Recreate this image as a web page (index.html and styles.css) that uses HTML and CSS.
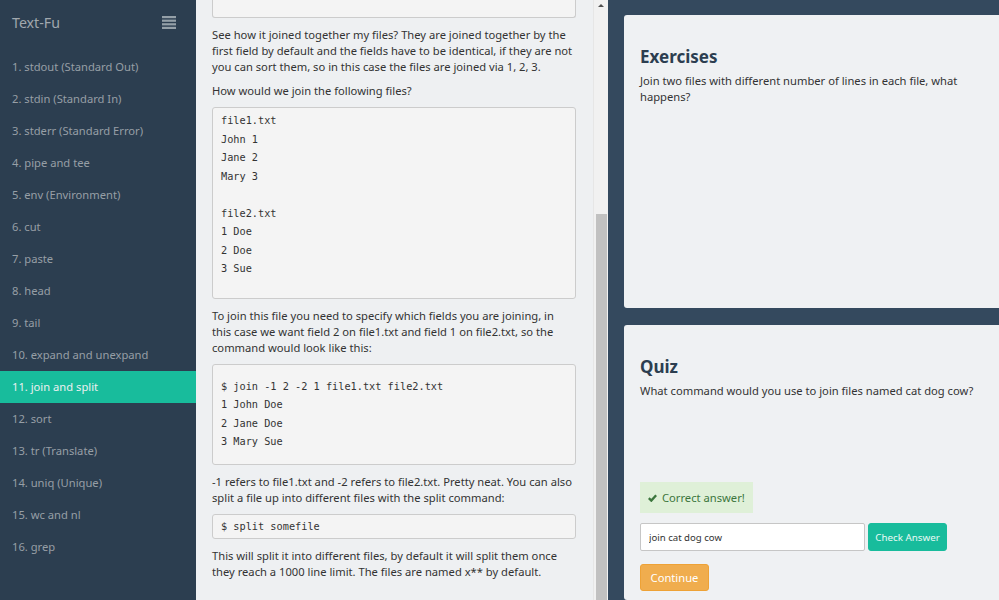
FILE: index.html
```html
<!DOCTYPE html>
<html lang="en">
<head>
<meta charset="utf-8">
<title>Text-Fu</title>
<link rel="stylesheet" href="styles.css">
</head>
<body>
<div class="app">
  <aside class="sidebar">
    <div class="sidebar-head">
      <span class="brand">Text-Fu</span>
      <svg class="menu-icon" width="14" height="13" viewBox="0 0 14 13"><rect x="0" y="0" width="14" height="2.2"/><rect x="0" y="3.6" width="14" height="2.2"/><rect x="0" y="7.2" width="14" height="2.2"/><rect x="0" y="10.8" width="14" height="2.2"/></svg>
    </div>
    <nav class="nav">
      <a class="nav-item">1. stdout (Standard Out)</a>
      <a class="nav-item">2. stdin (Standard In)</a>
      <a class="nav-item">3. stderr (Standard Error)</a>
      <a class="nav-item">4. pipe and tee</a>
      <a class="nav-item">5. env (Environment)</a>
      <a class="nav-item">6. cut</a>
      <a class="nav-item">7. paste</a>
      <a class="nav-item">8. head</a>
      <a class="nav-item">9. tail</a>
      <a class="nav-item">10. expand and unexpand</a>
      <a class="nav-item active">11. join and split</a>
      <a class="nav-item">12. sort</a>
      <a class="nav-item">13. tr (Translate)</a>
      <a class="nav-item">14. uniq (Unique)</a>
      <a class="nav-item">15. wc and nl</a>
      <a class="nav-item">16. grep</a>
    </nav>
  </aside>

  <main class="lesson">
    <div class="lesson-content">
      <div class="code code-tail"></div>
      <p>See how it joined together my files? They are joined together by the first field by default and the fields have to be identical, if they are not you can sort them, so in this case the files are joined via 1, 2, 3.</p>
      <p>How would we join the following files?</p>
<pre class="code code-files">file1.txt
John 1
Jane 2
Mary 3

file2.txt
1 Doe
2 Doe
3 Sue
</pre>
      <p>To join this file you need to specify which fields you are joining, in this case we want field 2 on file1.txt and field 1 on file2.txt, so the command would look like this:</p>
<pre class="code code-join">$ join -1 2 -2 1 file1.txt file2.txt
1 John Doe
2 Jane Doe
3 Mary Sue</pre>
      <p>-1 refers to file1.txt and -2 refers to file2.txt. Pretty neat. You can also split a file up into different files with the split command:</p>
<pre class="code code-split">$ split somefile</pre>
      <p>This will split it into different files, by default it will split them once they reach a 1000 line limit. The files are named x** by default.</p>
    </div>
    <div class="scrollbar">
      <div class="scroll-arrow"></div>
      <div class="scroll-thumb"></div>
    </div>
  </main>

  <section class="panels">
    <div class="card card-exercises">
      <h2>Exercises</h2>
      <p>Join two files with different number of lines in each file, what happens?</p>
    </div>
    <div class="card card-quiz">
      <h2>Quiz</h2>
      <p>What command would you use to join files named cat dog cow?</p>
      <div class="alert">
        <svg class="check" width="9" height="8" viewBox="0 0 9 8"><path d="M0.8 4.2 L3.3 6.6 L8.2 1.2" fill="none" stroke="currentColor" stroke-width="2.4"/></svg>
        <span>Correct answer!</span>
      </div>
      <div class="answer-row">
        <input class="answer" type="text" value="join cat dog cow">
        <button class="btn btn-check">Check Answer</button>
      </div>
      <button class="btn btn-continue">Continue</button>
    </div>
  </section>
</div>
</body>
</html>
```
FILE: styles.css
```css
* { box-sizing: border-box; }
html, body { margin: 0; padding: 0; height: 600px; overflow: hidden; }
body {
  font-family: "Noto Sans", "Open Sans", sans-serif;
  font-size: 11.2px;
  color: #333;
  background: #34495e;
}
.app {
  display: flex;
  height: 600px;
}

/* sidebar */
.sidebar {
  width: 196px;
  flex: none;
  background: #2c3e50;
}
.sidebar-head {
  height: 51px;
  display: flex;
  align-items: center;
  justify-content: space-between;
  padding: 0 20px 7px 12px;
}
.brand {
  font-size: 14.2px;
  color: #a1a8ae;
}
.menu-icon { fill: #95a0a8; }
.nav { display: flex; flex-direction: column; }
.nav-item {
  height: 32px;
  line-height: 32px;
  padding-left: 12px;
  color: #979fa6;
  font-size: 11.2px;
}
.nav-item.active {
  background: #18bc9c;
  color: #ecf0f1;
}

/* lesson column */
.lesson {
  width: 412px;
  flex: none;
  display: flex;
  background: #eef0f2;
}
.lesson-content {
  flex: 1;
  padding: 0 17px 0 16px;
}
.lesson-content p {
  margin: 0 0 8px;
  line-height: 16px;
}
.code {
  margin: 0 0 9px;
  background: #f4f4f4;
  border: 1px solid #cccccc;
  border-radius: 3px;
  font-family: "DejaVu Sans Mono", monospace;
  font-size: 10.25px;
  line-height: 18.5px;
  color: #333;
  padding: 2px 8px;
  white-space: pre;
}
.code-tail {
  height: 18px;
  border-top: 0;
  border-radius: 0 0 3px 3px;
}
.code-files { padding: 3px 8px 20px; }
.code-join { padding: 12px 8px 13px; }
.code-split { padding: 2px 8px 3px; }

.scrollbar {
  width: 15px;
  flex: none;
  background: #f1f1f1;
  border-left: 1px solid #e6e6e6;
  display: flex;
  flex-direction: column;
  align-items: center;
}
.scroll-arrow {
  margin-top: 4px;
  width: 0;
  height: 0;
  border-left: 3.5px solid transparent;
  border-right: 3.5px solid transparent;
  border-bottom: 3.5px solid #505050;
}
.scroll-thumb {
  margin-top: 206.5px;
  width: 11px;
  flex: 1;
  background: #c1c1c1;
}

/* right panels */
.panels {
  flex: 1;
  padding: 15px 0 0 16px;
  display: flex;
  flex-direction: column;
  gap: 17px;
}
.card {
  background: #eff1f3;
  border-radius: 3px 0 0 3px;
  padding: 31px 16px 0 16px;
}
.card-exercises { height: 293px; flex: none; }
.card-quiz { flex: 1; }
.card h2 {
  margin: 0 0 5px;
  font-size: 17px;
  line-height: 22px;
  font-weight: 700;
  color: #2c3e50;
}
.card p {
  margin: 0;
  line-height: 16px;
  color: #333;
}
.alert {
  margin-top: 83px;
  display: inline-flex;
  align-items: center;
  gap: 5px;
  height: 31px;
  padding: 0 8px 0 8px;
  background: #dff0d8;
  color: #3c763d;
  font-size: 11.2px;
}
.check { color: #3c763d; }
.answer-row {
  display: flex;
  gap: 3px;
  margin-top: 10px;
}
.answer {
  width: 225px;
  height: 28px;
  border: 1px solid #c6c6c6;
  border-radius: 2px;
  background: #fff;
  padding: 0 8px;
  font-family: "Noto Sans", sans-serif;
  font-size: 9.6px;
  color: #333;
}
.btn {
  font-family: "Noto Sans", sans-serif;
  border-radius: 3px;
  color: #fff;
  cursor: pointer;
}
.btn-check {
  height: 28px;
  width: 79px;
  padding: 0;
  border: 1px solid #18bc9c;
  background: #18bc9c;
  font-size: 9.8px;
  color: #eafaf6;
}
.btn-continue {
  display: block;
  margin-top: 13px;
  height: 27px;
  width: 69px;
  padding: 0;
  background: #f0ad4e;
  border: 1px solid #eea236;
  font-size: 11.2px;
}
```
